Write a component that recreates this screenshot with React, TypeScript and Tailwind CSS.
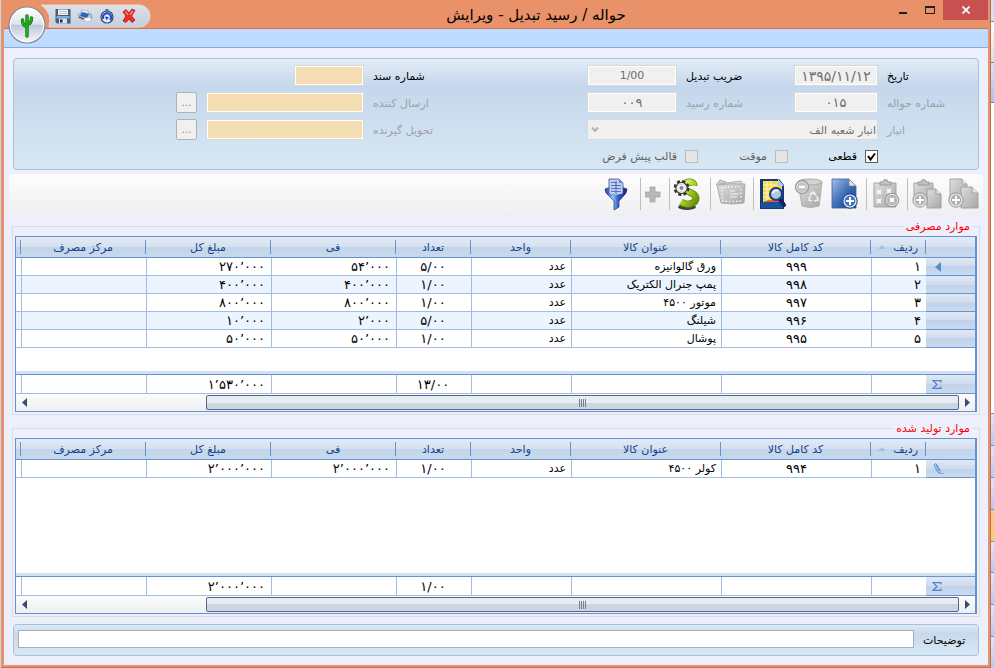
import { useState } from 'react';
import type { ReactNode } from 'react';
import clsx from 'clsx';

interface Item {
  code: string;
  title: string;
  unit: string;
  qty: string;
  fee: string;
  total: string;
}

const consumed: Item[] = [
  { code: '۹۹۹', title: 'ورق گالوانیزه', unit: 'عدد', qty: '۵/۰۰', fee: '۵۴’۰۰۰', total: '۲۷۰’۰۰۰' },
  { code: '۹۹۸', title: 'پمپ جنرال الکتریک', unit: 'عدد', qty: '۱/۰۰', fee: '۴۰۰’۰۰۰', total: '۴۰۰’۰۰۰' },
  { code: '۹۹۷', title: 'موتور ۴۵۰۰', unit: 'عدد', qty: '۱/۰۰', fee: '۸۰۰’۰۰۰', total: '۸۰۰’۰۰۰' },
  { code: '۹۹۶', title: 'شیلنگ', unit: 'عدد', qty: '۵/۰۰', fee: '۲’۰۰۰', total: '۱۰’۰۰۰' },
  { code: '۹۹۵', title: 'پوشال', unit: 'عدد', qty: '۱/۰۰', fee: '۵۰’۰۰۰', total: '۵۰’۰۰۰' },
];

const produced: Item[] = [
  { code: '۹۹۴', title: 'کولر ۴۵۰۰', unit: 'عدد', qty: '۱/۰۰', fee: '۲’۰۰۰’۰۰۰', total: '۲’۰۰۰’۰۰۰' },
];

const headers = ['', 'ردیف', 'کد کامل کالا', 'عنوان کالا', 'واحد', 'تعداد', 'فی', 'مبلغ کل', 'مرکز مصرف', ''];
const faDigits = '۰۱۲۳۴۵۶۷۸۹';

const svg32 = { width: 32, height: 34, viewBox: '0 0 32 34' };

// Shared gradients for all the toolbar drawings
function IconDefs() {
  return (
    <svg width="0" height="0" className="absolute" aria-hidden="true">
      <defs>
        <linearGradient id="blue" x1="0" y1="0" x2="1" y2="1">
          <stop offset="0" stopColor="#a3bfe6" />
          <stop offset=".5" stopColor="#3f6fb6" />
          <stop offset="1" stopColor="#0d3a86" />
        </linearGradient>
        <linearGradient id="gray" x1="0" y1="0" x2="1" y2="1">
          <stop offset="0" stopColor="#dedede" />
          <stop offset="1" stopColor="#a6a6a6" />
        </linearGradient>
        <linearGradient id="funnel" x1="0" y1="0" x2="1" y2="0">
          <stop offset="0" stopColor="#1d3a9c" />
          <stop offset=".35" stopColor="#8fc4ff" />
          <stop offset=".6" stopColor="#2f5fc8" />
          <stop offset="1" stopColor="#15246e" />
        </linearGradient>
        <linearGradient id="lime" x1="0" y1="0" x2="1" y2="1">
          <stop offset="0" stopColor="#e6f79a" />
          <stop offset=".5" stopColor="#a9cf1d" />
          <stop offset="1" stopColor="#668f08" />
        </linearGradient>
        <linearGradient id="orb" x1="0" y1="0" x2="0" y2="1">
          <stop offset="0" stopColor="#ffffff" />
          <stop offset=".48" stopColor="#dfe4ea" />
          <stop offset=".5" stopColor="#bcc8d8" />
          <stop offset="1" stopColor="#f6f9fc" />
        </linearGradient>
        <linearGradient id="qat" x1="0" y1="0" x2="0" y2="1">
          <stop offset="0" stopColor="#dde2ea" />
          <stop offset="1" stopColor="#c3cee0" />
        </linearGradient>
      </defs>
    </svg>
  );
}

function FunnelIcon() {
  return (
    <svg {...svg32}>
      <path d="M1 12q11-5 22 0l-1 4-7 8v6l-5 3v-9l-8-8z" fill="url(#funnel)" stroke="#20337f" strokeWidth=".7" />
      <path d="M5 2h10l4 4v11q-7 3-14 0z" fill="#c3cff0" stroke="#3b4c94" strokeWidth=".8" />
      <path d="M15 2v4h4z" fill="#6f83c4" />
      <path d="M7 5.500h6M7 8.500h10M7 11.500h10M7 14.500h10M12 4v13" stroke="#5b72b8" strokeWidth="1.200" />
      <path d="M1.500 14q4 4 10.500 4t10.500-4l-1 3-6 6q-3 1-6 0l-6-6z" fill="url(#funnel)" />
    </svg>
  );
}

function PlusIcon() {
  return (
    <svg width="20" height="34" viewBox="0 0 20 34">
      <path d="M5 10h5v5h5v5h-5v5H5v-5H0v-5h5z" fill="#b8b8b8" stroke="#a3a3a3" strokeWidth=".8" />
    </svg>
  );
}

function MoneyIcon() {
  return (
    <svg {...svg32}>
      <ellipse cx="13" cy="30" rx="9" ry="3" fill="#3f423d" />
      <path
        d="M20 9C20 3 9 4 10 10s12 5 12 11-9 8-15 4"
        fill="none" stroke="#5e8209" strokeWidth="7"
      />
      <path
        d="M20 9C20 3 9 4 10 10s12 5 12 11-9 8-15 4"
        fill="none" stroke="url(#lime)" strokeWidth="5.500"
      />
      <circle cx="7.500" cy="11" r="6" fill="none" stroke="#2d2d2d" strokeWidth="4" strokeDasharray="2.700 2" />
      <circle cx="7.500" cy="11" r="5" fill="#f2f2f2" stroke="#444" strokeWidth="2.500" />
      <circle cx="7.500" cy="11" r="4.300" fill="none" stroke="#eee" strokeWidth="1.500" />
      <circle cx="7.500" cy="11" r="2" fill="#888" />
    </svg>
  );
}

function BoardIcon() {
  return (
    <svg {...svg32}>
      <path d="M1 8l4-5 6 2 3 4" fill="#d0d0d0" stroke="#a9a9a9" />
      <path d="M4 7l22-3 2 5z" fill="#dedede" stroke="#b0b0b0" />
      <path d="M2 8q13-2 28-1l-1 19q-12 2-23 0z" fill="url(#gray)" stroke="#adadad" />
      <path d="M6 11q11-2 21-1M7 24q10 1 20 0" stroke="#f2f2f2" strokeWidth="1.500" strokeDasharray="1.500 2" fill="none" />
      <path d="M7 13v9M26 12v10" stroke="#f2f2f2" strokeWidth="1.500" strokeDasharray="1.500 2" />
      <path d="M15 14h5M15 17h9M15 20h7" stroke="#f5f5f5" strokeWidth="1.200" />
    </svg>
  );
}

function SearchSheetIcon() {
  return (
    <svg {...svg32}>
      <path d="M2 2h19l5 6v24H2z" fill="#12377c" />
      <path d="M5 4h15v5h4v20H5z" fill="#f5d84e" />
      <path d="M20 2l6 7h-6z" fill="#b9cbe8" />
      <path d="M5 8h14M5 12h12M5 16h8M5 20h8M9 4v20M13 4v18" stroke="#fff7c0" strokeWidth="1" />
      <path d="M3 26q9-4 22-2v7H3z" fill="#1a4f9a" />
      <path d="M9 24h13" stroke="#f0652a" strokeWidth="1.800" />
      <path d="M21 21l5 7" stroke="#0f2560" strokeWidth="4" strokeLinecap="round" />
      <circle cx="18" cy="17" r="6" fill="#a9c9f5" fillOpacity=".9" stroke="#1b3a80" strokeWidth="2" />
      <path d="M14.500 16q3-4 6-2" stroke="#fff" strokeWidth="1.500" fill="none" />
    </svg>
  );
}

function TrashIcon() {
  return (
    <svg {...svg32}>
      <path d="M4 5h24l-3 24q-9 3-17 0z" fill="url(#gray)" stroke="#b0b0b0" />
      <ellipse cx="16" cy="5" rx="12" ry="3" fill="#d4d4d4" stroke="#a9a9a9" />
      <path d="M16 18l3-3 3 3M23 19l1 4-4 1M18 24l-3-1 1-4" stroke="#eee" strokeWidth="1.800" fill="none" />
      <circle cx="8" cy="10" r="6.500" fill="#c2c2c2" stroke="#999" strokeWidth="1.300" />
      <circle cx="8" cy="10" r="5.300" fill="none" stroke="#e2e2e2" />
      <path d="M5 10h6" stroke="#fff" strokeWidth="2.500" />
    </svg>
  );
}

function PlusBadge({ cx, cy, active }: { cx: number; cy: number; active?: boolean }) {
  return (
    <g>
      <circle cx={cx} cy={cy} r="7.200" fill={active ? '#3f72c4' : '#b0b0b0'} stroke={active ? '#1c3f80' : '#999'} />
      <circle cx={cx} cy={cy} r="6" fill="none" stroke="#e6ecf5" strokeWidth="1.200" />
      <path d={`M${cx} ${cy - 4}v8M${cx - 4} ${cy}h8`} stroke="#fff" strokeWidth="2" />
    </g>
  );
}

function NewDocIcon() {
  return (
    <svg {...svg32}>
      <path d="M2 2h17l7 7v22H2z" fill="url(#blue)" stroke="#385f9f" strokeWidth=".8" />
      <path d="M19 2v7h7z" fill="#dfe5ec" stroke="#76849b" strokeWidth=".8" />
      <PlusBadge cx={20} cy={24} active />
    </svg>
  );
}

function ClipboardXIcon() {
  return (
    <svg {...svg32}>
      <path d="M3 6h22v24H3z" fill="url(#gray)" stroke="#a5a5a5" />
      <path d="M9 8V5h3a2.500 2.500 0 0 1 5 0h3v3z" fill="#c0c0c0" stroke="#9c9c9c" />
      <path d="M6 13l4 4m0-4l-4 4M6 22l4 4m0-4l-4 4M16 12l4 4m0-4l-4 4" stroke="#f7f7f7" strokeWidth="1.800" />
      <circle cx="21" cy="23" r="6.800" fill="#b3b3b3" stroke="#999" />
      <circle cx="21" cy="23" r="5.600" fill="none" stroke="#e3e3e3" />
      <path d="M19 21l4 4m0-4l-4 4" stroke="#fff" strokeWidth="2" />
    </svg>
  );
}

function ClipboardPlusIcon() {
  return (
    <svg {...svg32}>
      <path d="M2 6h19v21H2z" fill="url(#gray)" stroke="#a5a5a5" />
      <path d="M6 8V5h3a2.500 2.500 0 0 1 5 0h3v3z" fill="#c0c0c0" stroke="#9c9c9c" />
      <path d="M15 12h9l5 5v14H15z" fill="url(#gray)" stroke="#a0a0a0" />
      <path d="M24 12v5h5" fill="#e8e8e8" stroke="#a0a0a0" />
      <PlusBadge cx={8} cy={23} />
    </svg>
  );
}

function CopyDocIcon() {
  return (
    <svg {...svg32}>
      <path d="M2 2h12l5 5v20H2z" fill="url(#gray)" stroke="#a5a5a5" />
      <path d="M14 2v5h5" fill="#ececec" stroke="#a0a0a0" />
      <path d="M13 10h11l6 6v15H13z" fill="url(#gray)" stroke="#a0a0a0" />
      <path d="M24 10v6h6" fill="#e8e8e8" stroke="#a0a0a0" />
      <PlusBadge cx={8} cy={23} />
    </svg>
  );
}

function SaveIcon() {
  return (
    <svg width="16" height="16" viewBox="0 0 16 16">
      <path d="M.5 1h15v14.500H2L.5 14z" fill="#4b5d75" />
      <path d="M3 1.500h10V7H3z" fill="#f3f6f9" />
      <path d="M4 3.500h8M4 5.500h8" stroke="#b7c2cf" />
      <path d="M1.500 8h13v2.500h-13z" fill="#79afe6" />
      <path d="M4 10.500h8v5H4z" fill="#dbe4ee" />
      <path d="M5 11.500h2.500v3H5z" fill="#1f2937" />
    </svg>
  );
}

function PrintIcon() {
  return (
    <svg width="16" height="16" viewBox="0 0 16 16">
      <path d="M4 2l7 1 2 4-8-1z" fill="#f6f8fa" stroke="#9aa5b5" strokeWidth=".6" />
      <path d="M1 7l4-3 9 2 1 4-5 3-8-3z" fill="#b9c1ce" stroke="#77839a" strokeWidth=".6" />
      <path d="M5 4.500l7 1.500-2 4-7-2z" fill="#2463c7" />
      <path d="M6 11l6-2 3 3-5 2z" fill="#fdfdfd" stroke="#a9b2bf" strokeWidth=".6" />
      <path d="M2 9l5 2" stroke="#444" />
    </svg>
  );
}

function RefreshIcon() {
  return (
    <svg width="16" height="16" viewBox="0 0 16 16">
      <circle cx="8" cy="9" r="6" fill="#eef3fb" stroke="#38465f" strokeWidth="1.200" />
      <path d="M6.500 1h3v2h-3z" fill="#5d687a" />
      <path d="M4.500 11A4 4 0 1 1 11 12" fill="none" stroke="#1f4fc0" strokeWidth="2.200" />
      <path d="M6 8.500l4 .5-2.500 3.500z" fill="#1f4fc0" />
    </svg>
  );
}

function DeleteIcon() {
  return (
    <svg width="16" height="16" viewBox="0 0 16 16">
      <path d="M2 4l3-2.500 3 3.500 3-4 3 1.500L10.500 8l3.500 4-3 2.500L8 11l-3 3.500L2 13l3-5z" fill="#ee2d24" stroke="#b5120f" strokeWidth=".8" />
      <path d="M4.500 3.500L7 7M12 3L9 6.500" stroke="#ff9c8c" strokeWidth="1.200" />
    </svg>
  );
}

function CactusOrb() {
  return (
    <svg width="38" height="38" viewBox="0 0 38 38">
      <circle cx="19" cy="19" r="18" fill="url(#orb)" stroke="#85899a" strokeWidth="1.200" />
      <circle cx="19" cy="19" r="16.700" fill="none" stroke="#fff" strokeWidth="1" />
      <path d="M19 30V10M19 20q-4.500 0-4.500-6M19 18q4.500 0 4.500-6" fill="none" stroke="#0f780b" strokeWidth="3.400" strokeLinecap="round" />
      <path d="M19 30V10M19 20q-4.500 0-4.500-6M19 18q4.500 0 4.500-6" fill="none" stroke="#24ab1c" strokeWidth="2" strokeLinecap="round" />
    </svg>
  );
}

function TitleBar() {
  return (
    <header className="relative flex h-7 shrink-0 items-start">
      <div className="relative h-7 w-[147px] shrink-0">
        <svg width="112" height="24" viewBox="0 0 112 24" className="absolute top-1 left-[36px]">
          <path d="M1 1H99a11 11 0 0 1 0 22H9Q13 9 1 1z" fill="url(#qat)" stroke="#f3d5ca" />
        </svg>
        <div className="absolute top-2 left-[51px] flex gap-[6px]">
          <button aria-label="ذخیره"><SaveIcon /></button>
          <button aria-label="چاپ"><PrintIcon /></button>
          <button aria-label="بازخوانی"><RefreshIcon /></button>
          <button aria-label="حذف"><DeleteIcon /></button>
        </div>
      </div>
      <button aria-label="منو" className="absolute top-[6px] left-[4px] z-10">
        <CactusOrb />
      </button>
      <h1 dir="rtl" className="flex-1 pl-8 text-center text-[15px] leading-[30px] text-black">
        حواله / رسید تبدیل - ویرایش
      </h1>
      <div className="flex text-[#1f1f1f]">
        <button aria-label="Minimize" className="flex h-5 w-[27px] items-center justify-center">
          <span className="mt-[5px] h-[2px] w-2 bg-current" />
        </button>
        <button aria-label="Maximize" className="flex h-5 w-[27px] items-center justify-center">
          <span className="h-2 w-[10px] border border-t-2 border-current" />
        </button>
        <button aria-label="Close" className="flex h-5 w-[45px] items-center justify-center bg-[#c75050]">
          <svg width="8" height="8" viewBox="0 0 8 8">
            <path d="M.5.5l7 7m0-7l-7 7" stroke="#fff" strokeWidth="1.600" />
          </svg>
        </button>
      </div>
    </header>
  );
}

const fieldBase = 'h-[21px] min-w-0 border border-[#d9d9d9] text-center shadow-[inset_0_0_0_1px_#fff]';
const labelBase = 'pt-[3px] whitespace-nowrap';

function Field({ id, label, value, disabled, tan, className }: {
  id: string; label: string; value?: string; disabled?: boolean; tan?: boolean; className?: string;
}) {
  return (
    <>
      <input
        id={id}
        defaultValue={value}
        readOnly
        className={clsx(fieldBase, 'w-full', tan ? 'bg-[#f5deb3]' : 'bg-[#f0f0f0] text-[#6d6d6d]', className)}
      />
      <label htmlFor={id} className={clsx(labelBase, disabled ? 'text-[#a0a0a0]' : 'text-black')}>{label}</label>
    </>
  );
}

function Check({ label, checked }: { label: string; checked?: boolean }) {
  const [on, setOn] = useState(!!checked);
  return (
    <label className={clsx('flex w-[90px] items-center gap-2', checked ? 'text-black' : 'text-[#5f5f5f]')}>
      <span className="relative flex size-[13px]">
        <input
          type="checkbox"
          checked={on}
          disabled={!checked}
          onChange={(e) => setOn(e.target.checked)}
          className="size-[13px] appearance-none border border-[#606060] bg-white disabled:border-[#bcbcbc] disabled:bg-[#e6e6e6]"
        />
        {on && (
          <svg width="13" height="13" viewBox="0 0 13 13" className="pointer-events-none absolute inset-0">
            <path d="M3 6l2.500 3.500L10 3.500" fill="none" stroke="#000" strokeWidth="2" />
          </svg>
        )}
      </span>
      <span className="whitespace-nowrap">{label}</span>
    </label>
  );
}

function DotsButton({ label }: { label: string }) {
  return (
    <button aria-label={label} className="col-start-2 h-[21px] rounded-xs border border-[#adb2b5] bg-[#f0f0f0] text-[#8f8f8f]">
      ...
    </button>
  );
}

const panel = 'mx-[9px] rounded-[4px] border border-[#a9c0d6] bg-linear-to-b';

function HeaderForm() {
  return (
    <section
      className={clsx(
        panel,
        'grid h-[112px] shrink-0 content-start items-center gap-x-[9px] gap-y-[6px] pt-[6px]',
        'grid-cols-[1fr_21px_158px_205px_90px_99px_84px_91px]',
        'from-[#e3ecf6] via-[#c5d7ec] via-25% to-[#d7e8f4]'
      )}
    >
      <input id="doc" readOnly className={clsx(fieldBase, 'col-start-3 w-[70px] justify-self-end bg-[#f5deb3]')} />
      <label htmlFor="doc" className={clsx(labelBase, 'text-black')}>شماره سند</label>
      <Field id="ratio" label="ضریب تبدیل" value="1/00" />
      <Field id="date" label="تاریخ" value="۱۳۹۵/۱۱/۱۲" className="text-[14px]" />

      <DotsButton label="انتخاب ارسال کننده" />
      <Field id="sender" label="ارسال کننده" disabled tan />
      <Field id="receipt" label="شماره رسید" value="۰۰۹" disabled className="text-[13px]" />
      <Field id="transfer" label="شماره حواله" value="۰۱۵" disabled className="text-[13px]" />

      <DotsButton label="انتخاب تحویل گیرنده" />
      <Field id="receiver" label="تحویل گیرنده" disabled tan />
      <div className="relative col-span-3">
        <select id="store" dir="rtl" className="h-[21px] w-full appearance-none border border-[#d9d9d9] bg-[#f0f0f0] px-px pt-[2px] text-[#6d6d6d]">
          <option>انبار شعبه الف</option>
        </select>
        <svg width="8" height="8" viewBox="0 0 8 8" className="pointer-events-none absolute top-[7px] left-[4px]">
          <path d="M1 1.500l3 3.500 3-3.500" fill="none" stroke="#b2b2b2" strokeWidth="2" />
        </svg>
      </div>
      <label htmlFor="store" className={clsx(labelBase, 'text-[#a0a0a0]')}>انبار</label>

      <div dir="rtl" className="col-span-4 col-start-4 flex h-[21px] items-center">
        <Check label="قطعی" checked />
        <Check label="موقت" />
        <Check label="قالب پیش فرض" />
      </div>
    </section>
  );
}

function ToolButton({ label, className, children }: { label: string; className?: string; children: ReactNode }) {
  return <button aria-label={label} className={className}>{children}</button>;
}

const Sep = () => <span className="h-8 w-px bg-[#bdbdbd]" />;

function Toolbar() {
  return (
    <div className="mx-[5px] mt-1 flex h-[43px] shrink-0 items-center justify-end gap-1 rounded-sm bg-linear-to-b from-[#fdfdfd] to-[#efeff1] pr-[3px] pb-[3px]">
      <ToolButton label="فیلتر"><FunnelIcon /></ToolButton>
      <Sep />
      <ToolButton label="افزودن"><PlusIcon /></ToolButton>
      <Sep />
      <ToolButton label="محاسبه مبلغ"><MoneyIcon /></ToolButton>
      <Sep />
      <ToolButton label="سند" className="w-[34px]"><BoardIcon /></ToolButton>
      <Sep />
      <ToolButton label="جستجو"><SearchSheetIcon /></ToolButton>
      <ToolButton label="حذف ردیف"><TrashIcon /></ToolButton>
      <ToolButton label="ردیف جدید"><NewDocIcon /></ToolButton>
      <Sep />
      <ToolButton label="پاک کردن"><ClipboardXIcon /></ToolButton>
      <Sep />
      <ToolButton label="چسباندن"><ClipboardPlusIcon /></ToolButton>
      <ToolButton label="کپی"><CopyDocIcon /></ToolButton>
    </div>
  );
}

const indicatorBg = 'bg-[linear-gradient(#dfe8f5,#cfdcee_50%,#c0d2ea_50%,#cbdaee)]';

function HScroll() {
  return (
    <div dir="ltr" className="flex h-[17px] shrink-0 items-center bg-linear-to-b from-[#fbfbfb] to-[#eeeff1]">
      <button aria-label="scroll left" className="flex w-[190px] pl-[6px]">
        <svg width="5" height="9" viewBox="0 0 5 9"><path d="M5 0v9L0 4.500z" fill="#3c4a6e" /></svg>
      </button>
      <div className="flex h-[15px] flex-1 items-center justify-center gap-px rounded-xs border border-[#56658f] bg-linear-to-b from-[#e8edf3] from-50% to-[#ccd5e0] to-50%">
        {[0, 1, 2, 3].map((i) => <span key={i} className="h-2 w-px bg-[#757d8c]" />)}
      </div>
      <button aria-label="scroll right" className="flex w-4 justify-center">
        <svg width="5" height="9" viewBox="0 0 5 9"><path d="M0 0v9l5-4.500z" fill="#3c4a6e" /></svg>
      </button>
    </div>
  );
}

function ItemGrid({ title, rows, marker, qtySum, totalSum }: {
  title: string; rows: Item[]; marker: ReactNode; qtySum: string; totalSum: string;
}) {
  const cell = 'border-b border-l border-[#a3bde0] px-[5px] py-0 text-right whitespace-nowrap';
  const num = 'text-[13px]';
  return (
    <fieldset dir="rtl" className="mx-2 flex min-w-0 flex-1 flex-col border border-[#dcdce2] p-[2px]">
      <legend className="mr-[5px] px-[2px] leading-[15px] text-[#f00]">{title}</legend>
      <div className="flex flex-1 flex-col border border-r-2 border-[#6593cf] bg-white">
        <table className="w-full flex-1 table-fixed border-separate border-spacing-0 leading-[17px]">
          <colgroup>
            <col className="w-[49px]" />
            <col className="w-[55px]" />
            <col className="w-[150px]" />
            <col className="w-[150px]" />
            <col className="w-[100px]" />
            <col className="w-[75px]" />
            <col className="w-[125px]" />
            <col className="w-[125px]" />
            <col className="w-[125px]" />
            <col />
          </colgroup>
          <thead>
            <tr className="h-[21px]">
              {headers.map((h, i) => (
                <th key={i} className="h-[21px] border-b border-[#6593cf] bg-[linear-gradient(#e3ebf5,#d4e0ef_50%,#c3d5eb_50%,#c8d9ed)] p-0 font-normal text-[#15428b]">
                  <div className={clsx('flex h-[14px] items-center', i > 0 && 'border-r border-[#6593cf]', i === 1 ? 'justify-between px-[7px]' : 'justify-center')}>
                    {h}
                    {i === 1 && (
                      <svg width="8" height="4" viewBox="0 0 8 4"><path d="M0 4h8L4 0z" fill="#99c2f5" /></svg>
                    )}
                  </div>
                </th>
              ))}
            </tr>
          </thead>
          <tbody>
            {rows.map((r, i) => (
              <tr key={r.code} className={clsx('h-[18px]', i % 2 === 1 && 'bg-[#ebf4ff]')}>
                <td className={clsx('border-b border-[#6593cf] p-0', indicatorBg)}>{i === 0 && marker}</td>
                <td className={clsx(cell, num)}>{faDigits[i + 1]}</td>
                <td className={clsx(cell, num, '!text-center')}>{r.code}</td>
                <td className={cell}>{r.title}</td>
                <td className={cell}>{r.unit}</td>
                <td dir="ltr" className={clsx(cell, num, '!text-center')}>{r.qty}</td>
                <td dir="ltr" className={clsx(cell, num)}>{r.fee}</td>
                <td dir="ltr" className={clsx(cell, num)}>{r.total}</td>
                <td className={cell} />
                <td className="border-b border-[#a3bde0] p-0" />
              </tr>
            ))}
            <tr><td colSpan={10} className="p-0" /></tr>
          </tbody>
          <tfoot>
            <tr className="h-1">
              <td colSpan={10} className="h-1 border-b border-[#6593cf] bg-[#d3e0f0] p-0" />
            </tr>
            <tr className="h-[19px]">
              <td className={clsx('border-b border-[#6593cf] p-0', indicatorBg)}>
                <svg width="10" height="9" viewBox="0 0 10 9" className="mr-[33px]">
                  <path d="M9 2.500V.7H1.200L5 4.500 1.200 8.300H9V6.500" fill="none" stroke="#5585c8" strokeWidth="1.300" />
                </svg>
              </td>
              <td className={cell} />
              <td className={cell} />
              <td className={cell} />
              <td className={cell} />
              <td dir="ltr" className={clsx(cell, num, '!text-center')}>{qtySum}</td>
              <td className={cell} />
              <td dir="ltr" className={clsx(cell, num)}>{totalSum}</td>
              <td className={cell} />
              <td className="border-b border-[#a3bde0] p-0" />
            </tr>
          </tfoot>
        </table>
        <HScroll />
      </div>
    </fieldset>
  );
}

// Sliver of the parent window that shows at the right edge
function BackWindow() {
  return (
    <div className="flex w-[3px] shrink-0 flex-col bg-white">
      <div className="h-[22px] border-b border-[#6593cf] bg-[#cfe0f7]" />
      <div className="h-10 bg-linear-to-b from-white to-[#dcdcdc]" />
      <div className="h-[41px] border-y border-[#6a82ab] bg-linear-to-b from-[#d5e5fb] to-[#a5c5f0]" />
      <div className="h-[312px]" />
      {[0, 1, 2, 3, 4, 5, 6, 7].map((i) => (
        <div
          key={i}
          className={clsx('h-8 border-t border-[#6593cf] bg-linear-to-b', i === 3 ? 'from-[#fbc98a] to-[#f8cf5c]' : 'from-[#dce9fb] to-[#aeccf5]')}
        />
      ))}
    </div>
  );
}

export default function App() {
  return (
    <div className="flex h-screen min-h-[600px] overflow-hidden bg-[#c6d6ea] pl-px font-['DejaVu_Sans',sans-serif] text-[11px] leading-4">
      <IconDefs />
      <div className="flex min-w-0 flex-1 flex-col border-r border-b border-[#bf6f4d] bg-[#e99168] pr-[2px] pb-[2px] pl-[3px]">
        <TitleBar />
        <main className="flex min-h-0 flex-1 flex-col border-t border-[#cf7552] bg-[#edeffc]">
          <div className="h-[19px] shrink-0 border-b border-[#85ace0] bg-[#bfdbff]" />
          <div className="h-[10px] shrink-0" />
          <HeaderForm />
          <Toolbar />
          <div className="flex flex-1 flex-col gap-[6px] pt-[2px]">
            <ItemGrid
              title="موارد مصرفی"
              rows={consumed}
              qtySum="۱۳/۰۰"
              totalSum="۱’۵۳۰’۰۰۰"
              marker={
                <svg width="6" height="10" viewBox="0 0 6 10" className="mr-[34px]"><path d="M6 0v10L0 5z" fill="#5a8ccc" /></svg>
              }
            />
            <ItemGrid
              title="موارد تولید شده"
              rows={produced}
              qtySum="۱/۰۰"
              totalSum="۲’۰۰۰’۰۰۰"
              marker={
                <svg width="11" height="11" viewBox="0 0 11 11" className="mr-[31px]">
                  <path d="M1 2l2-1.500 4 7v3L4.500 9zM3 2l3 6M8 10.500h1M10 10.500h1" fill="none" stroke="#5a8ccc" />
                </svg>
              }
            />
          </div>
          <section className={clsx(panel, 'mt-[7px] mb-[9px] flex h-8 shrink-0 items-center gap-[9px] pb-[2px] pl-1 from-[#dde9f5] via-[#c8d9ed] via-30% to-[#d7e8f4]')}>
            <input id="notes" className="h-[18px] min-w-0 flex-1 border border-[#abadb3] bg-white px-1" />
            <label htmlFor="notes" className={clsx(labelBase, 'w-[55px] text-black')}>توضیحات</label>
          </section>
        </main>
      </div>
      <BackWindow />
    </div>
  );
}
